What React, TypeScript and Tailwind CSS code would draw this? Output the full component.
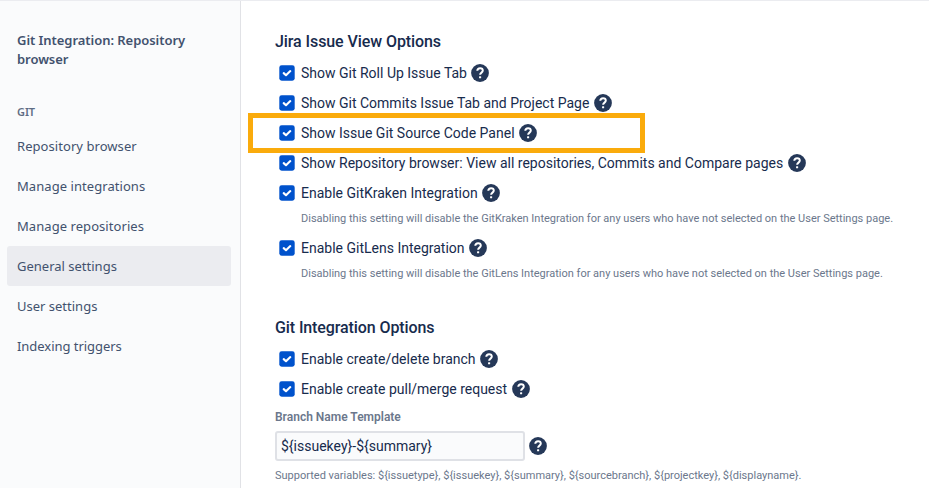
import React from "react";

const navItems = [
  { label: "Repository browser", spacing: "tracking-[0.06px]" },
  { label: "Manage integrations", spacing: "tracking-[0.06px]" },
  { label: "Manage repositories", spacing: "tracking-[0.06px]" },
  { label: "General settings", spacing: "tracking-[0px]", active: true },
  { label: "User settings", spacing: "tracking-[0px]" },
  { label: "Indexing triggers", spacing: "tracking-[-0.04px]" },
];

function Help({ className = "" }: { className?: string }) {
  return (
    <svg viewBox="0 0 512 512" className={`h-[18px] w-[18px] shrink-0 ${className}`}>
      <circle cx="256" cy="256" r="253" fill="#253858" />
      <path
        d="M178 192c4-50 38-74 80-74 46 0 78 30 78 68 0 62-77 56-77 122"
        fill="none"
        stroke="#fff"
        strokeWidth="56"
      />
      <rect x="229" y="350" width="60" height="58" rx="16" fill="#fff" />
    </svg>
  );
}

function Check() {
  return (
    <svg viewBox="0 0 16 16" className="h-4 w-4 shrink-0">
      <rect x="0.3" y="0.3" width="15.4" height="15.4" rx="2.4" fill="#0052cc" />
      <path
        d="M4.7 8.1l2.3 2.1 4.3-4.1"
        fill="none"
        stroke="#fff"
        strokeWidth="2.1"
        strokeLinecap="round"
        strokeLinejoin="round"
      />
    </svg>
  );
}

function Option({ label }: { label: string }) {
  return (
    <div className="flex h-[30px] items-center pl-1">
      <Check />
      <span className="ml-1.5 whitespace-nowrap">{label}</span>
      <Help className="ml-[4.4px]" />
    </div>
  );
}

function Note({ children }: { children: React.ReactNode }) {
  return (
    <p className="h-[25px] whitespace-nowrap pl-[26px] pt-[3px] text-[11px] leading-4 tracking-[-0.005px] text-[#6b778c]">
      {children}
    </p>
  );
}

export default function App() {
  return (
    <div className="relative flex h-[488px] w-[929px] overflow-hidden bg-white">
      <div className="absolute left-0 top-0 h-px w-full bg-[#ebecf0]" />
      <aside className="w-[241px] shrink-0 border-r border-[#e1e2e6] bg-[#fafbfc] pl-[7px] pr-[9px] pt-[31px] font-['Noto_Sans',sans-serif] text-[13px] text-[#42526e]">
        <h1 className="pl-2.5 font-semibold leading-[19px] tracking-[-0.05px]">
          Git Integration: Repository
          <br />
          browser
        </h1>
        <h2 className="mt-[35px] pl-2.5 text-[11px] font-semibold leading-4 tracking-[-0.1px] text-[#5e6c84]">GIT</h2>
        <nav className="mt-[6px]">
          {navItems.map((item) => (
            <a
              key={item.label}
              className={`flex h-10 items-center rounded-[3px] pl-2.5 pt-0.5 ${item.active ? "bg-[#ebecf0]" : ""}`}
            >
              <span className={item.spacing}>{item.label}</span>
            </a>
          ))}
        </nav>
      </aside>
      <main className="min-w-0 flex-1 pl-[34px] pt-[30px] font-[Roboto,sans-serif] text-[14px] text-[#172b4d]">
        <h2 className="h-[28px] text-[16px] font-medium leading-6 tracking-[-0.08px]">Jira Issue View Options</h2>
        <Option label="Show Git Roll Up Issue Tab" />
        <Option label="Show Git Commits Issue Tab and Project Page" />
        <div className="relative">
          <Option label="Show Issue Git Source Code Panel" />
          <div className="absolute -left-[27px] -top-[5px] h-10 w-[397px] border-[5px] border-[#faab0c]" />
        </div>
        <Option label="Show Repository browser: View all repositories, Commits and Compare pages" />
        <Option label="Enable GitKraken Integration" />
        <Note>
          Disabling this setting will disable the GitKraken Integration for any users who have not selected on the User
          Settings page.
        </Note>
        <Option label="Enable GitLens Integration" />
        <Note>
          Disabling this setting will disable the GitLens Integration for any users who have not selected on the User
          Settings page.
        </Note>
        <h2 className="mt-[28px] h-[28px] text-[16px] font-medium leading-6 tracking-[-0.1px]">
          Git Integration Options
        </h2>
        <Option label="Enable create/delete branch" />
        <Option label="Enable create pull/merge request" />
        <label className="mt-[5px] block text-[12px] font-semibold leading-4 text-[#6b778c]">Branch Name Template</label>
        <div className="mt-[6px] flex items-center">
          <div className="flex h-[30px] w-[250px] items-center rounded-[3px] border-2 border-[#dfe1e6] bg-[#fafbfc] pl-1">
            {"${issuekey}-${summary}"}
          </div>
          <Help className="ml-[4.4px]" />
        </div>
        <p className="mt-[7px] whitespace-nowrap text-[11px] leading-4 text-[#6b778c]">
          {"Supported variables: ${issuetype}, ${issuekey}, ${summary}, ${sourcebranch}, ${projectkey}, ${displayname}."}
        </p>
      </main>
    </div>
  );
}
